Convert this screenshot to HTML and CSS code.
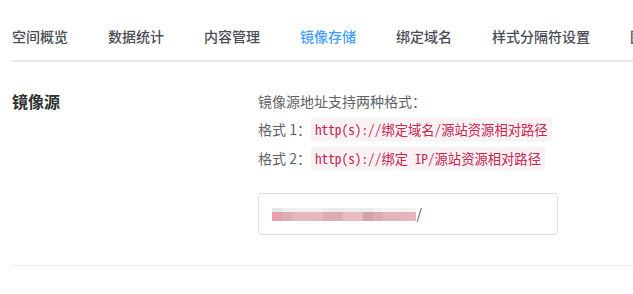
FILE: index.html
```html
<!DOCTYPE html>
<html lang="zh-CN">
<head>
<meta charset="utf-8">
<title>镜像存储</title>
<link rel="stylesheet" href="styles.css">
</head>
<body>
<div class="page">
  <div class="tabs">
    <div class="tab">空间概览</div>
    <div class="tab">数据统计</div>
    <div class="tab">内容管理</div>
    <div class="tab active">镜像存储</div>
    <div class="tab">绑定域名</div>
    <div class="tab">样式分隔符设置</div>
    <div class="tab">图片处理</div>
  </div>
  <div class="section">
    <div class="label">镜像源</div>
    <div class="content">
      <p class="line">镜像源地址支持两种格式：</p>
      <p class="line">格式 1：<code class="code">http(s)://绑定域名/源站资源相对路径</code></p>
      <p class="line">格式 2：<code class="code">http(s)://绑定 IP/源站资源相对路径</code></p>
      <div class="input">
        <span class="mosaic"><span class="slash">/</span></span>
      </div>
    </div>
  </div>
  <div class="divider"></div>
</div>
</body>
</html>
```

FILE: styles.css
```css
html, body {
  margin: 0;
  padding: 0;
  background: #fff;
}
body {
  font-family: "Noto Sans CJK SC", "Noto Sans", sans-serif;
  color: #606266;
  font-size: 14px;
  overflow: hidden;
}
.page {
  padding-left: 12px;
  width: 900px;
}
.tabs {
  display: flex;
  padding-top: 16px;
  border-bottom: 2px solid #e4e7ed;
  width: 621px;
  overflow: hidden;
}
.tab {
  flex: none;
  position: relative;
  line-height: 40px;
  height: 44px;
  padding: 0 20px;
  font-weight: 500;
  color: #4a4d55;
  white-space: nowrap;
}
.tab:first-child {
  padding-left: 0;
}
.tab.active {
  color: #409eff;
}
.tab.active::after {
  content: "";
  position: absolute;
  left: 20px;
  right: 20px;
  bottom: -2px;
  height: 2px;
  background: #409eff;
}
.section {
  display: grid;
  grid-template-columns: 246px 1fr;
  padding-top: 25px;
  padding-bottom: 30px;
}
.label {
  font-size: 16px;
  font-weight: 700;
  color: #303133;
  line-height: 24px;
  padding-top: 2px;
}
.content {
  display: flex;
  flex-direction: column;
}
.line {
  margin: 0;
  line-height: 28px;
  white-space: nowrap;
}
.code {
  font-family: "Noto Sans Mono CJK SC", "Liberation Mono", monospace;
  font-size: 13.3px;
  color: #c7254e;
  background: #f9f2f4;
  padding: 2px 4px;
  border-radius: 4px;
}
.input {
  margin-top: 20px;
  width: 300px;
  height: 42px;
  border: 1px solid #dcdfe6;
  border-radius: 4px;
  box-sizing: border-box;
  display: flex;
  align-items: center;
  padding-left: 13px;
}
.mosaic {
  position: relative;
  display: block;
  width: 144px;
  height: 13px;
  background:
    linear-gradient(to right, #e8a1ac 0 10px, #dcadb7 10px 20px, #e4b7c0 20px 41px, #e5b8c0 41px 51px, #dcacb5 51px 71px, #e6bbc3 71px 91px, #d6a0ab 91px 101px, #dda9b3 101px 111px, #e3b4bd 111px 131px, #e7b3bd 131px 144px) bottom / 100% 9px no-repeat,
    linear-gradient(to right, #e6e6e6 0 10px, #f0f0f0 10px 51px, #ececec 51px 101px, #f2f2f2 101px 144px) top / 100% 4px no-repeat;
}
.slash {
  position: absolute;
  right: -6px;
  top: -3px;
  font-size: 14px;
  line-height: 16px;
  color: #4a5a78;
}
.divider {
  height: 1px;
  background: #ebeef5;
  width: 621px;
}
```
